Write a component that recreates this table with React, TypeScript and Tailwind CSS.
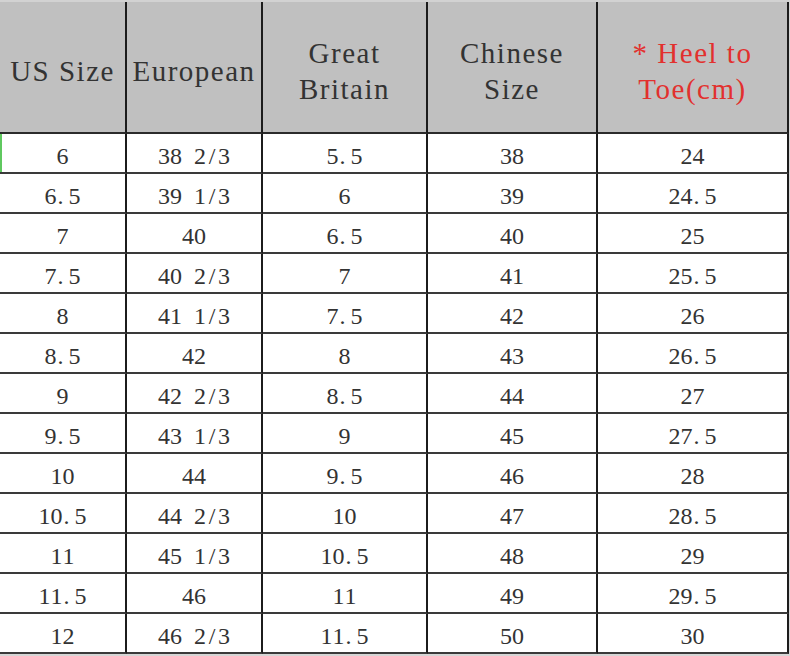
const rows = [
  ["6", "38 2/3", "5.5", "38", "24"],
  ["6.5", "39 1/3", "6", "39", "24.5"],
  ["7", "40", "6.5", "40", "25"],
  ["7.5", "40 2/3", "7", "41", "25.5"],
  ["8", "41 1/3", "7.5", "42", "26"],
  ["8.5", "42", "8", "43", "26.5"],
  ["9", "42 2/3", "8.5", "44", "27"],
  ["9.5", "43 1/3", "9", "45", "27.5"],
  ["10", "44", "9.5", "46", "28"],
  ["10.5", "44 2/3", "10", "47", "28.5"],
  ["11", "45 1/3", "10.5", "48", "29"],
  ["11.5", "46", "11", "49", "29.5"],
  ["12", "46 2/3", "11.5", "50", "30"],
];

const headers = [
  { lines: ["US Size"], red: false },
  { lines: ["European"], red: false },
  { lines: ["Great", "Britain"], red: false },
  { lines: ["Chinese", "Size"], red: false },
  { lines: ["* Heel to", "Toe(cm)"], red: true },
];

// half-width cells, like the spreadsheet's CJK font renders latin text
function Num({ v }: { v: string }) {
  return (
    <span className="flex">
      {v.split("").map((ch, i) => (
        <span
          key={i}
          className={`inline-block w-[12px] ${ch === "." ? "text-left pl-[1px]" : "text-center"}`}
        >
          {ch === " " ? "\u00a0" : ch}
        </span>
      ))}
    </span>
  );
}

export default function App() {
  return (
    <div className="w-[790px] h-[656px] bg-[#d6d6d6] overflow-hidden font-['Liberation_Serif',serif]">
      <div className="grid grid-cols-[127px_136px_165px_170px_191px] w-[789px] border-t-2 border-[#d2d2d2]">
        {headers.map((h, i) => (
          <div
            key={i}
            className={`h-[132px] bg-[#c0c0c0] border-b-2 border-b-[#2b2b2b] border-r-2 border-r-[#1c1c1c] flex flex-col items-center justify-center pt-2 text-[29px] leading-[36px] tracking-[1.5px] whitespace-pre ${
              h.red ? "text-[#e2302e]" : "text-[#333]"
            }`}
          >
            {h.lines.map((l) => (
              <span key={l}>{l}</span>
            ))}
          </div>
        ))}
        {rows.map((r, ri) =>
          r.map((c, ci) => (
            <div
              key={ri + "-" + ci}
              className="relative h-[40px] bg-white border-b-2 border-b-[#3a3a3a] border-r-2 border-r-[#1c1c1c] flex items-center justify-center pt-[5px] text-[24px] text-[#333]"
            >
              {ri === 0 && ci === 0 && (
                <span className="absolute left-0 top-0 bottom-0 w-[2px] bg-[#5fc85f]" />
              )}
              <Num v={c} />
            </div>
          ))
        )}
      </div>
    </div>
  );
}
